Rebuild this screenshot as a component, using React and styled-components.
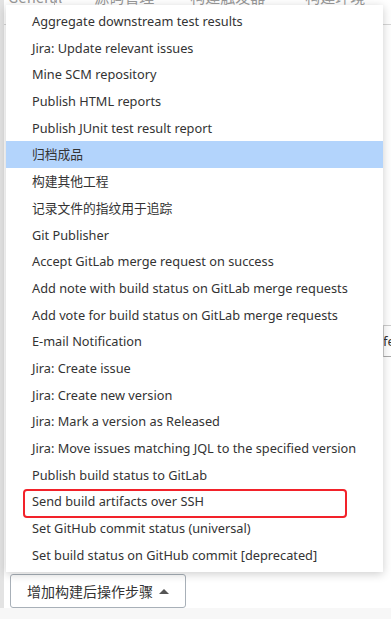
import React from 'react';
import styled, { createGlobalStyle } from 'styled-components';

const GlobalStyle = createGlobalStyle`
  html, body {
    margin: 0;
    padding: 0;
    background: #f7f7f7;
  }
  body {
    font-family: "Noto Sans", "Noto Sans CJK SC", sans-serif;
    color: #333;
    overflow: hidden;
  }
`;

const Page = styled.div`
  position: relative;
  width: 391px;
  height: 619px;
  overflow: hidden;
`;

const Section = styled.div`
  height: 608px;
  background: #fff;
  border-left: 4px solid #e3e3e3;
  display: flex;
  flex-direction: column;
`;

const Tabs = styled.div`
  display: flex;
  align-items: flex-start;
  height: 38px;
  margin-top: -14px;
  border-bottom: 1px solid #d6d6d6;
  font-size: 15px;
  color: #999;
  font-family: "Noto Sans CJK SC", sans-serif;
`;

const Tab = styled.div`
  margin-left: ${p => p.$gap || 0}px;
  padding-left: ${p => p.$pad || 0}px;
  border-left: ${p => (p.$sep ? '1px solid #bbb' : 'none')};
  line-height: 22px;
  white-space: nowrap;
`;

const Body = styled.div`
  flex: 1;
  display: flex;
  flex-direction: column;
  justify-content: space-between;
  padding-top: 300px;
`;

const SideInput = styled.div`
  align-self: flex-end;
  width: 7px;
  height: 30px;
  border-top: 1px solid #ccc;
  border-bottom: 1px solid #aaa;
  border-left: 1px solid #ccc;
  font-size: 13px;
  line-height: 30px;
  color: #333;
  overflow: hidden;
  text-indent: -1px;
`;

const AddButton = styled.button`
  align-self: flex-start;
  margin: 0 0 0 6px;
  height: 34px;
  width: 176px;
  border: 1px solid #a8b0b8;
  border-radius: 3px;
  background: #fff;
  font-family: "Noto Sans CJK SC", sans-serif;
  font-size: 14px;
  color: #333;
  display: flex;
  align-items: center;
  justify-content: center;
  gap: 6px;
  padding: 0;
`;

const Caret = styled.span`
  width: 0;
  height: 0;
  border-left: 5px solid transparent;
  border-right: 5px solid transparent;
  border-bottom: 5px solid #555;
`;

const Menu = styled.ul`
  position: absolute;
  left: 6px;
  top: 5px;
  width: 377px;
  margin: 0;
  padding: 3px 0 4px;
  list-style: none;
  background: #fff;
  box-shadow: 0 2px 9px rgba(0, 0, 0, 0.2);
`;

const Item = styled.li`
  position: relative;
  height: 26.7px;
  line-height: 26.7px;
  padding-left: 26px;
  font-size: 12.75px;
  color: #333;
  white-space: nowrap;
  background: ${p => (p.$active ? '#b3d4fc' : 'transparent')};
`;

const Marker = styled.span`
  position: absolute;
  left: 17px;
  top: 1px;
  width: 320px;
  height: 25px;
  border: 2.5px solid #f2222a;
  border-radius: 4px;
  pointer-events: none;
`;

const items = [
  'Aggregate downstream test results',
  'Jira: Update relevant issues',
  'Mine SCM repository',
  'Publish HTML reports',
  'Publish JUnit test result report',
  '归档成品',
  '构建其他工程',
  '记录文件的指纹用于追踪',
  'Git Publisher',
  'Accept GitLab merge request on success',
  'Add note with build status on GitLab merge requests',
  'Add vote for build status on GitLab merge requests',
  'E-mail Notification',
  'Jira: Create issue',
  'Jira: Create new version',
  'Jira: Mark a version as Released',
  'Jira: Move issues matching JQL to the specified version',
  'Publish build status to GitLab',
  'Send build artifacts over SSH',
  'Set GitHub commit status (universal)',
  'Set build status on GitHub commit [deprecated]',
];

export default function App() {
  return (
    <Page>
      <GlobalStyle />
      <Section>
        <Tabs>
          <Tab $pad={4}>General</Tab>
          <Tab $sep $gap={-8} $pad={39}>源码管理</Tab>
          <Tab $gap={36}>构建触发器</Tab>
          <Tab $gap={40}>构建环境</Tab>
        </Tabs>
        <Body>
          <SideInput>fe</SideInput>
          <AddButton>
            增加构建后操作步骤 <Caret />
          </AddButton>
        </Body>
      </Section>
      <Menu>
        {items.map(text => (
          <Item key={text} $active={text === '归档成品'}>
            {text}
            {text === 'Send build artifacts over SSH' && <Marker />}
          </Item>
        ))}
      </Menu>
    </Page>
  );
}
